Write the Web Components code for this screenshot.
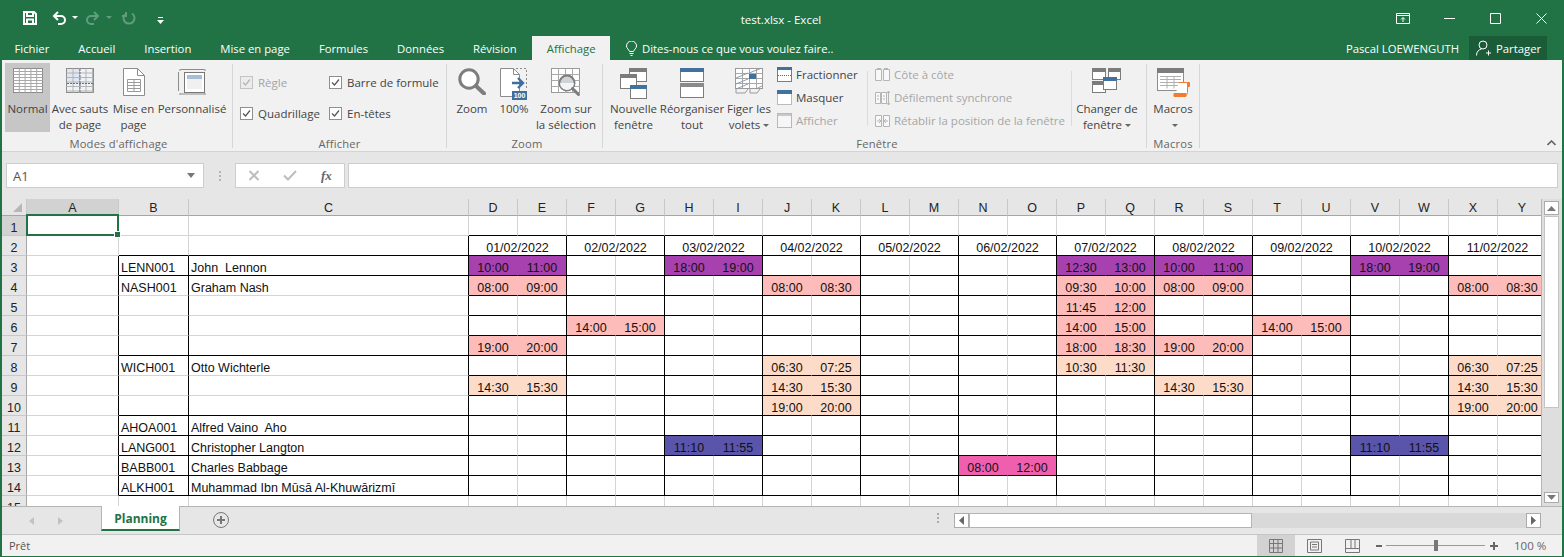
<!DOCTYPE html>
<html lang="fr">
<head>
<meta charset="utf-8">
<title>test.xlsx - Excel</title>
<style>
	html, body { margin: 0; padding: 0; background: #fff; }
</style>
</head>
<body>
<xl-app>
	<xl-titlebar title-text="test.xlsx - Excel"></xl-titlebar>
	<xl-tabs></xl-tabs>
	<xl-ribbon>
		<ribbon-group label="Modes d'affichage" w="231" pad="3">
			<ribbon-btn icon="normal" w="45" active>Normal</ribbon-btn>
			<ribbon-btn icon="breaks" w="60">Avec sauts<br>de page</ribbon-btn>
			<ribbon-btn icon="layout" w="47">Mise en<br>page</ribbon-btn>
			<ribbon-btn icon="custom" w="70">Personnalisé</ribbon-btn>
		</ribbon-group>
		<ribbon-group label="Afficher" w="214">
			<check-grid>
				<ribbon-check disabled>Règle</ribbon-check>
				<ribbon-check>Barre de formule</ribbon-check>
				<ribbon-check>Quadrillage</ribbon-check>
				<ribbon-check>En-têtes</ribbon-check>
			</check-grid>
		</ribbon-group>
		<ribbon-group label="Zoom" w="156" pad="5">
			<ribbon-btn icon="zoom" w="40">Zoom</ribbon-btn>
			<ribbon-btn icon="hundred" w="44">100%</ribbon-btn>
			<ribbon-btn icon="zoomsel" w="60">Zoom sur<br>la sélection</ribbon-btn>
		</ribbon-group>
		<ribbon-group label="Fenêtre" w="544" pad="5">
			<ribbon-btn icon="newwin" w="51">Nouvelle<br>fenêtre</ribbon-btn>
			<ribbon-btn icon="arrange" w="66">Réorganiser<br>tout</ribbon-btn>
			<ribbon-btn icon="freeze" w="48" caret>Figer les<br>volets</ribbon-btn>
			<small-list style="margin-left:4px;width:90px">
				<ribbon-small icon="split">Fractionner</ribbon-small>
				<ribbon-small icon="hide">Masquer</ribbon-small>
				<ribbon-small icon="show" disabled>Afficher</ribbon-small>
			</small-list>
			<inner-sep></inner-sep>
			<small-list style="margin-left:7px;width:196px">
				<ribbon-small icon="side" disabled>Côte à côte</ribbon-small>
				<ribbon-small icon="sync" disabled>Défilement synchrone</ribbon-small>
				<ribbon-small icon="reset" disabled>Rétablir la position de la fenêtre</ribbon-small>
			</small-list>
			<inner-sep></inner-sep>
			<ribbon-btn icon="switchwin" w="68" caret style="margin-left:1px">Changer de<br>fenêtre</ribbon-btn>
		</ribbon-group>
		<ribbon-group label="Macros" w="53">
			<ribbon-btn icon="macros" w="52" caret>Macros<br></ribbon-btn>
		</ribbon-group>
		<collapse-chevron></collapse-chevron>
	</xl-ribbon>
	<xl-formulabar></xl-formulabar>
	<xl-sheet></xl-sheet>
	<xl-sheettabs></xl-sheettabs>
	<xl-status></xl-status>
</xl-app>

<script>
'use strict';

const UI_FONT = `"Open Sans", "Noto Sans", sans-serif`;

// repeated hair lines for the little table pictures
const rules = (x, y, w, h, dx, dy) => {
	let d = '';
	if (dx) for (let i = x + dx; i < x + w; i += dx) d += `M${i} ${y}v${h}`;
	if (dy) for (let j = y + dy; j < y + h; j += dy) d += `M${x} ${j}h${w}`;
	return d;
};

const svg = (w, h, body) => `<svg width="${w}" height="${h}" viewBox="0 0 ${w} ${h}" fill="none" aria-hidden="true">${body}</svg>`;

const ICONS = {
	normal: svg(30, 25, `<rect x=".5" y=".5" width="29" height="24" fill="#fff" stroke="#8c8c8c"/><path d="${rules(0.5, 0.5, 29, 24, 5.8, 3)}" stroke="#a8a8a8"/>`),
	breaks: svg(28, 25, `<rect x=".5" y=".5" width="27" height="24" fill="#eef3f8" stroke="#8c8c8c"/><rect x="1" y="1" width="13" height="14" fill="#dfe8f2"/><path d="${rules(0.5, 0.5, 27, 24, 6.5, 4.5)}" stroke="#b4b4b4"/><path d="M14 1v23M1 15.5h26" stroke="#6d6d6d" stroke-dasharray="2 1"/>`),
	layout: svg(22, 28, `<path d="M.5.5h14l7 7v20H.5z" fill="#fff" stroke="#8c8c8c"/><path d="M14.5.5v7h7" stroke="#8c8c8c"/><path d="M4.5 11.5h13v12h-13z${rules(4.5, 11.5, 13, 12, 6.5, 3)}" stroke="#9a9a9a"/>`),
	custom: svg(28, 27, `<path d="M2.5 1.5h24M.5 4v19M2.5 26h24" stroke="#8c8c8c"/><path d="M2 1v2M27 1v2M2 25v2M27 25v2" stroke="#8c8c8c"/><rect x="6.5" y="4.5" width="20" height="20" fill="#fff" stroke="#777"/><rect x="9" y="7" width="15" height="4" fill="#a9bdd4"/><rect x="9" y="11" width="15" height="10" fill="#f0f0f0"/>`),
	zoom: svg(28, 27, `<circle cx="11" cy="11" r="9.2" fill="#fff" stroke="#7d7d7d" stroke-width="3"/><path d="M18 18l8 7.5" stroke="#7d7d7d" stroke-width="4" stroke-linecap="round"/>`),
	hundred: svg(28, 32, `<path d="M.5.5h13l6 6v22H.5z" fill="#fff" stroke="#8c8c8c"/><path d="M13.5.5v6h6" stroke="#8c8c8c"/><path d="M16 .5h10.5V22" stroke="#8c8c8c" stroke-dasharray="2 2"/><path d="M12 15h10M18 10l5 5-5 5" stroke="#3f6f9f" stroke-width="2.4"/><rect x="12" y="23" width="15" height="9" fill="#3f6f9f"/><text x="19.5" y="30.4" text-anchor="middle" font-family="Liberation Sans, sans-serif" font-size="7" font-weight="700" fill="#fff">100</text>`),
	zoomsel: svg(30, 29, `<rect x=".5" y=".5" width="28" height="24" fill="#fff" stroke="#9a9a9a"/><path d="${rules(0.5, 0.5, 28, 24, 7, 6)}" stroke="#ababab"/><circle cx="16" cy="15" r="7.5" fill="#cfd3d8" stroke="#7d7d7d" stroke-width="2"/><path d="M9 15a7 7 0 0 0 14 0z" fill="#f4f4f4"/><path d="M21.5 20.5l6 6" stroke="#7d7d7d" stroke-width="3" stroke-linecap="round"/>`),
	newwin: svg(28, 31, `<rect x="9.5" y=".5" width="17" height="13" fill="#fff" stroke="#7c7c7c"/><rect x="9" y="0" width="18" height="4" fill="#7c7c7c"/><rect x=".5" y="6.5" width="16" height="14" fill="#fff" stroke="#7c7c7c"/><rect x="0" y="6" width="17" height="4" fill="#7c7c7c"/><rect x="10.5" y="17.5" width="16" height="13" fill="#fff" stroke="#7c7c7c"/><rect x="10" y="17" width="17" height="4" fill="#41719c"/>`),
	arrange: svg(24, 30, `<rect x=".5" y=".5" width="23" height="13" fill="#fff" stroke="#7c7c7c"/><rect x="0" y="0" width="24" height="4" fill="#41719c"/><rect x=".5" y="15.5" width="23" height="14" fill="#fff" stroke="#7c7c7c"/><rect x="0" y="15" width="24" height="4" fill="#8a8a8a"/>`),
	freeze: svg(28, 26, `<rect x=".5" y=".5" width="27" height="20" fill="#fff" stroke="#9a9a9a"/><path d="${rules(0.5, 0.5, 27, 20, 7, 5)}" stroke="#a8a8a8"/><path d="M1 10l12-5M1 16l12-5M1 21l12-5M14 5l13-5M21 21l6-3" stroke="#8a9db0"/><rect x="14" y="6" width="7" height="5" fill="#41719c"/><path d="M1 21v4h9l3-4M15 21v4h7l3-4" stroke="#9a9a9a"/>`),
	split: svg(15, 15, `<rect x=".5" y=".5" width="14" height="14" fill="#fff" stroke="#7c7c7c"/><rect x="0" y="0" width="15" height="3" fill="#41719c"/><path d="M1 8.5h13" stroke="#666" stroke-dasharray="1 1"/>`),
	hide: svg(15, 15, `<rect x=".5" y=".5" width="14" height="14" fill="#fff" stroke="#7c7c7c" stroke-dasharray="1 1"/><rect x="0" y="0" width="15" height="4" fill="#41719c"/>`),
	show: svg(15, 15, `<rect x=".5" y=".5" width="14" height="14" fill="#f6f6f6" stroke="#b8b8b8"/><rect x="1" y="1" width="13" height="2" fill="#c8c8c8"/>`),
	side: svg(15, 15, `<path d="M.5 2.5h6v11h-6zM8.5 2.5h6v11h-6z" fill="#f8f8f8" stroke="#b5b5b5"/><path d="M2 1.5h4M9 1.5h4" stroke="#b5b5b5"/>`),
	sync: svg(15, 15, `<path d="M.5 2.5h5v11h-5zM6.5 2.5h5v11h-5z" fill="#f8f8f8" stroke="#b5b5b5"/><path d="M2 6h2M2 9h2M8 6h2M8 9h2M13.5 1v14M12 3l1.5-2 1.5 2M12 13l1.5 2 1.5-2" stroke="#b5b5b5"/>`),
	reset: svg(15, 15, `<path d="M.5 2.5h6v11h-6zM8.5 2.5h6v11h-6z" fill="#f8f8f8" stroke="#b5b5b5"/><path d="M2 8h4M4 6l2 2-2 2M13 8H9M11 6L9 8l2 2" stroke="#b5b5b5"/>`),
	switchwin: svg(30, 26, `<rect x=".5" y=".5" width="13" height="11" fill="#fff" stroke="#7c7c7c"/><rect x="0" y="0" width="14" height="4" fill="#7c7c7c"/><rect x="16.5" y=".5" width="12" height="11" fill="#fff" stroke="#7c7c7c"/><rect x="16" y="0" width="13" height="4" fill="#7c7c7c"/><rect x=".5" y="13.5" width="13" height="11" fill="#fff" stroke="#7c7c7c"/><rect x="0" y="13" width="14" height="4" fill="#7c7c7c"/><rect x="11.5" y="9.5" width="13" height="12" fill="#fff" stroke="#7c7c7c"/><rect x="11" y="9" width="14" height="4" fill="#41719c"/>`),
	macros: svg(33, 29, `<rect x=".5" y=".5" width="26" height="22" fill="#fff" stroke="#8c8c8c"/><rect x="0" y="0" width="27" height="5" fill="#7c7c7c"/><path d="${rules(3, 8.5, 21, 12, 7, 3)}" stroke="#b0b0b0"/><path d="M3 8.5h21" stroke="#b0b0b0"/><path d="M21.5 14.5h9v10a3 3 0 0 1-3 3h-9" fill="#fff" stroke="#ed7d31"/><path d="M30.5 14.5h2v4h-2M17 28.5h12v-3H17z" fill="#ed7d31" stroke="#ed7d31"/>`)
};

// Base class: shadow root filled from a css and an html string
const shell = (css, html) => class extends HTMLElement {
	constructor () {
		super();
		this.attachShadow({mode: 'open'}).innerHTML = `<style>${css}</style>${html}`;
	}
};

customElements.define('xl-app', shell(`
	:host {
		display: flex;
		flex-direction: column;
		box-sizing: border-box;
		width: 1564px;
		height: 557px;
		overflow: hidden;
		background: #f1f1f1;
		border: solid #217346;
		border-width: 0 2px 1px 2px;
		font: 11.5px ${UI_FONT};
		color: #444;
	}
`, `<slot></slot>`));

customElements.define('xl-titlebar', class extends HTMLElement {
	constructor () {
		super();
		const shadow = this.attachShadow({mode: 'open'});
		shadow.innerHTML = `
			<style>
				:host {
					display: grid;
					grid-template-columns: 696px 166px 1fr;
					align-items: center;
					height: 36px;
					margin: 0 -2px;
					padding-left: 2px;
					background: #217346;
					color: #fff;
				}
				.qat { display: flex; align-items: center; height: 32px; padding-left: 21px; }
				.qat svg { display: block; }
				.title { text-align: center; font-size: 11.5px; margin-top: 3px; }
				.win { display: flex; justify-content: flex-end; height: 32px; }
				.win span { width: 46px; display: flex; align-items: center; justify-content: center; }
			</style>
			<div class="qat">
				<svg width="14" height="14" viewBox="0 0 14 14" fill="none" stroke="#fff" stroke-width="2"><path d="M1 1h10l2 2v10H1z"/><path d="M4 1v4h6V1M4 13V8.500h6V13"/></svg>
				<svg style="margin-left:15px" width="15" height="14" viewBox="0 0 15 14" fill="none" stroke="#fff" stroke-width="2"><path d="M6 1L2 5l4 4M2 5h7a4 4 0 0 1 0 8H6"/></svg>
				<svg style="margin-left:5px" width="6" height="4" viewBox="0 0 6 4" fill="#fff"><path d="M0 0h6L3 3z"/></svg>
				<svg style="margin-left:7px" width="15" height="14" viewBox="0 0 15 14" fill="none" stroke="#5f9d7c" stroke-width="2"><path d="M9 1l4 4-4 4M13 5H6a4 4 0 0 0 0 8h3"/></svg>
				<svg style="margin-left:6px" width="6" height="4" viewBox="0 0 6 4" fill="#5f9d7c"><path d="M0 0h6L3 3z"/></svg>
				<svg style="margin-left:10px" width="14" height="14" viewBox="0 0 14 14" fill="none" stroke="#5f9d7c" stroke-width="2"><path d="M10 2.500a5.500 5.500 0 1 1-6 0M4 1v4H0"/></svg>
				<svg style="margin-left:21px;margin-top:4px" width="7" height="7" viewBox="0 0 7 7" fill="#fff"><path d="M1 0h5v1H1zM0 3h7L3.500 7z"/></svg>
			</div>
			<div class="title">${this.getAttribute('title-text')}</div>
			<div class="win">
				<span><svg width="14" height="11" viewBox="0 0 14 11" fill="none" stroke="#fff"><path d="M.5.500h13v10H.5zM.5 2.500h13M7 9V4.500M5 6.500l2-2 2 2"/></svg></span>
				<span><svg width="11" height="1" viewBox="0 0 11 1" fill="#fff"><path d="M0 0h11v1H0z"/></svg></span>
				<span><svg width="11" height="11" viewBox="0 0 11 11" fill="none" stroke="#fff"><path d="M.5.500h10v10H.5z"/></svg></span>
				<span><svg width="11" height="11" viewBox="0 0 11 11" fill="none" stroke="#fff"><path d="M.5.500l10 10M10.500.500l-10 10"/></svg></span>
			</div>
		`;
	}
});

customElements.define('xl-tabs', class extends HTMLElement {
	constructor () {
		super();
		const names = ['Fichier', 'Accueil', 'Insertion', 'Mise en page', 'Formules', 'Données', 'Révision'];
		const shadow = this.attachShadow({mode: 'open'});
		shadow.innerHTML = `
			<style>
				:host {
					display: flex;
					align-items: stretch;
					height: 24px;
					margin: 0 -2px;
					background: #217346;
					color: #fff;
					font-size: 11.300px;
					line-height: 25px;
				}
				.tab { padding: 0 14.500px; white-space: nowrap; }
				.tab:first-child { padding-left: 13px; }
				.tab.on { background: #f1f1f1; color: #217346; margin-left: 1px; }
				.ask { display: flex; align-items: center; gap: 5px; margin-left: 16px; }
				.ask svg { margin-top: 1px; }
				.right { margin-left: auto; display: flex; align-items: stretch; }
				.user { padding-right: 10px; }
				.share { display: flex; align-items: center; gap: 5px; width: 78px; box-sizing: border-box; padding-left: 7px; margin-right: 17px; background: #1a5c38; }
			</style>
			${names.map(n => `<div class="tab">${n}</div>`).join('')}
			<div class="tab on">Affichage</div>
			<div class="ask">
				<svg width="11" height="15" viewBox="0 0 11 15" fill="none" stroke="#fff"><path d="M3.500 10.500C3 8.500.5 7.500.5 5a5 5 0 0 1 10 0c0 2.500-2.500 3.500-3 5.500zM3.500 12.500h4M4.500 14.500h2"/></svg>
				<span>Dites-nous ce que vous voulez faire..</span>
			</div>
			<div class="right">
				<div class="user">Pascal LOEWENGUTH</div>
				<div class="share">
					<svg width="15" height="16" viewBox="0 0 15 16" fill="none" stroke="#fff"><circle cx="7" cy="5" r="4"/><path d="M.5 15.500c0-4 2.500-6 5-6.500M10 13h5M12.500 10.500v5"/></svg>
					<span>Partager</span>
				</div>
			</div>
		`;
	}
});

customElements.define('xl-ribbon', shell(`
	:host {
		display: flex;
		position: relative;
		box-sizing: border-box;
		height: 92px;
		padding-top: 4px;
		background: #f1f1f1;
		border-bottom: 1px solid #d4d4d4;
	}
`, `<slot></slot>`));

customElements.define('ribbon-group', class extends HTMLElement {
	constructor () {
		super();
		const shadow = this.attachShadow({mode: 'open'});
		shadow.innerHTML = `
			<style>
				:host {
					display: flex;
					flex-direction: column;
					flex: none;
					box-sizing: border-box;
					width: ${this.getAttribute('w')}px;
					height: 84px;
					padding-left: ${this.getAttribute('pad') || 0}px;
					border-right: 1px solid #d6d6d6;
				}
				.body { display: flex; flex: 1; min-height: 0; margin-top: -1px; }
				.label { text-align: center; line-height: 21px; height: 15px; color: #666; font-size: 11.200px; letter-spacing: .2px; }
			</style>
			<div class="body"><slot></slot></div>
			<div class="label">${this.getAttribute('label')}</div>
		`;
	}
});

customElements.define('ribbon-btn', class extends HTMLElement {
	constructor () {
		super();
		const shadow = this.attachShadow({mode: 'open'});
		shadow.innerHTML = `
			<style>
				:host {
					display: block;
					flex: none;
					box-sizing: border-box;
					width: ${this.getAttribute('w')}px;
					height: 69px;
					text-align: center;
					line-height: 16px;
					white-space: nowrap;
				}
				:host([active]) { background: #c6c6c6; }
				.icon { display: flex; align-items: flex-start; justify-content: center; height: 38px; padding-top: 5px; box-sizing: border-box; }
				.icon svg { display: block; }
				.caret { display: inline-block; vertical-align: 2px; margin-left: 3px; border: 3px solid transparent; border-top: 3px solid #666; border-bottom: 0; }
				.text { margin: 0 -6px; }
			</style>
			<div class="icon">${ICONS[this.getAttribute('icon')]}</div>
			<div class="text"><slot></slot>${this.hasAttribute('caret') ? '<span class="caret"></span>' : ''}</div>
		`;
	}
});

customElements.define('check-grid', shell(`
	:host {
		display: grid;
		grid-template-columns: 89px auto;
		grid-template-rows: 31px 31px;
		padding: 4px 0 0 7px;
	}
`, `<slot></slot>`));

customElements.define('ribbon-check', class extends HTMLElement {
	constructor () {
		super();
		const shadow = this.attachShadow({mode: 'open'});
		const off = this.hasAttribute('disabled');
		shadow.innerHTML = `
			<style>
				:host { display: flex; align-items: center; gap: 5px; white-space: nowrap; color: ${off ? '#a3a3a3' : '#444'}; }
				svg { display: block; flex: none; }
			</style>
			<svg width="13" height="13" viewBox="0 0 13 13" fill="none"><rect x=".5" y=".5" width="12" height="12" fill="${off ? '#ececec' : '#fff'}" stroke="${off ? '#c4c4c4' : '#8f8f8f'}"/><path d="M3 6.500l2.500 2.500 4.500-5.500" stroke="${off ? '#b5b5b5' : '#555'}" stroke-width="1.200"/></svg>
			<span><slot></slot></span>
		`;
	}
});

customElements.define('small-list', shell(`
	:host {
		display: flex;
		flex-direction: column;
		flex: none;
	}
`, `<slot></slot>`));

customElements.define('ribbon-small', class extends HTMLElement {
	constructor () {
		super();
		const shadow = this.attachShadow({mode: 'open'});
		shadow.innerHTML = `
			<style>
				:host { display: flex; align-items: center; gap: 4px; height: 23px; white-space: nowrap; color: ${this.hasAttribute('disabled') ? '#a6a6a6' : '#444'}; }
				svg { display: block; flex: none; }
			</style>
			${ICONS[this.getAttribute('icon')]}
			<span><slot></slot></span>
		`;
	}
});

customElements.define('inner-sep', shell(`
	:host { display: block; flex: none; width: 1px; height: 55px; margin-top: 8px; background: #dcdcdc; }
`, ``));

customElements.define('collapse-chevron', shell(`
	:host { position: absolute; right: 6px; bottom: 5px; display: block; line-height: 0; }
`, `<svg width="9" height="6" viewBox="0 0 9 6" fill="none" stroke="#666" stroke-width="1.600"><path d="M.5 5l4-4 4 4"/></svg>`));

customElements.define('xl-formulabar', class extends HTMLElement {
	constructor () {
		super();
		const shadow = this.attachShadow({mode: 'open'});
		shadow.innerHTML = `
			<style>
				:host {
					display: flex;
					box-sizing: border-box;
					height: 47px;
					padding: 11px 4px 11px 4px;
					background: #e6e6e6;
					color: #555;
				}
				.box { box-sizing: border-box; height: 25px; background: #fff; border: 1px solid #cdcdcd; }
				.name { width: 198px; display: flex; align-items: center; justify-content: space-between; padding: 0 8px 0 6px; font-size: 13px; color: #555; }
				.name i { border: 4px solid transparent; border-top: 5px solid #777; border-bottom: 0; }
				.dots { width: 31px; display: flex; flex-direction: column; align-items: center; justify-content: center; gap: 2px; }
				.dots i { width: 2px; height: 2px; background: #b4b4b4; }
				.btns { width: 110px; display: flex; align-items: center; gap: 23px; padding-left: 12px; }
				.fx { font: italic 700 13px "Liberation Serif", serif; color: #666; margin-left: 1px; }
				.input { flex: 1; margin-left: 3px; }
			</style>
			<div class="box name"><span>A1</span><i></i></div>
			<div class="dots"><i></i><i></i><i></i></div>
			<div class="box btns">
				<svg width="12" height="11" viewBox="0 0 12 11" fill="none" stroke="#bdbdbd" stroke-width="2"><path d="M1.500 1l9 9M10.500 1l-9 9"/></svg>
				<svg width="14" height="11" viewBox="0 0 14 11" fill="none" stroke="#bdbdbd" stroke-width="2"><path d="M1 5.500l4 4L13 1"/></svg>
				<span class="fx">fx</span>
			</div>
			<div class="box input"></div>
		`;
	}
});

customElements.define('xl-sheet', class extends HTMLElement {
	constructor () {
		super();
		const shadow = this.attachShadow({mode: 'open'});
		shadow.innerHTML = `
			<style>
				:host {
					display: flex;
					flex: 1;
					min-height: 0;
					background: #e4e4e4;
				}
				.wrap {
					position: relative;
					width: 1540px;
					flex: none;
					overflow: hidden;
					background: #fff;
					border-right: 1px solid #b4b4b4;
					box-sizing: border-box;
				}
				.grid {
					display: grid;
					grid-template-columns: 25px 92px 70px 280px repeat(22, 49px);
					grid-template-rows: 17px repeat(15, 20px);
					font: 12.500px "Liberation Sans", Arial, sans-serif;
					color: #111;
				}
				.grid div { box-sizing: border-box; white-space: nowrap; overflow: hidden; }
				.hd { background: #e6e6e6; color: #222; text-align: center; line-height: 18px; border-right: 1px solid #c8c8c8; border-bottom: 1px solid #a6a6a6; }
				.hd.on { background: #d2d2d2; }
				.corner { position: relative; }
				.corner::after { content: ''; position: absolute; right: 4px; bottom: 3px; border: solid transparent; border-width: 0 0 9px 9px; border-bottom-color: #b7b7b7; }
				.rw { background: #e6e6e6; color: #222; text-align: center; line-height: 24px; border-right: 1px solid #a6a6a6; border-bottom: 1px solid #c8c8c8; }
				.rw.on { background: #d2d2d2; }
				.c { line-height: 24px; padding-left: 2px; border-right: 1px solid #d4d4d4; border-bottom: 1px solid #d4d4d4; }
				.t { text-align: center; padding-left: 0; }
				.sel { position: absolute; left: 24px; top: 15px; width: 93px; height: 22px; box-sizing: border-box; border: 2px solid #217346; }
				.sel i { position: absolute; right: -4px; bottom: -4px; width: 5px; height: 5px; background: #217346; border: 1px solid #fff; }
				.v { flex: 1; display: flex; flex-direction: column; align-items: center; padding: 2px 2px 3px 0; box-sizing: border-box; background: #dedede; }
				.arrow { box-sizing: border-box; flex: none; width: 15px; height: 14px; background: #fff; border: 1px solid #ababab; display: flex; align-items: center; justify-content: center; }
				.arrow.down { height: 11px; }
				.thumb { box-sizing: border-box; width: 15px; height: 192px; background: #fff; border: 1px solid #c4c4c4; margin-top: 1px; }
				.gap { flex: 1; }
			</style>
			<div class="wrap">
				<div class="grid"></div>
				<div class="sel"><i></i></div>
			</div>
			<div class="v">
				<div class="arrow"><svg width="9" height="5" viewBox="0 0 9 5" fill="#777"><path d="M4.500 0L9 5H0z"/></svg></div>
				<div class="thumb"></div>
				<div class="gap"></div>
				<div class="arrow down"><svg width="9" height="5" viewBox="0 0 9 5" fill="#777"><path d="M0 0h9L4.500 5z"/></svg></div>
			</div>
		`;
		this.build(shadow.querySelector('.grid'));
	}

	build (grid) {
		const letters = 'ABCDEFGHIJKLMNOPQRSTUVWXY'.split('');
		const ids = {3: ['LENN001', 'John  Lennon'], 4: ['NASH001', 'Graham Nash'], 8: ['WICH001', 'Otto Wichterle'], 11: ['AHOA001', 'Alfred Vaino  Aho'], 12: ['LANG001', 'Christopher Langton'], 13: ['BABB001', 'Charles Babbage'], 14: ['ALKH001', 'Muhammad Ibn Mūsā Al-Khuwārizmī']};
		const purple = '#a741af';
		const rose = '#fdbcb9';
		const peach = '#fcdbc8';
		const blue = '#5a55aa';
		const magenta = '#f05fae';
		// row -> first column letter of the pair -> [start, end, fill]
		const times = {
			3: {D: ['10:00', '11:00', purple], H: ['18:00', '19:00', purple], P: ['12:30', '13:00', purple], R: ['10:00', '11:00', purple], V: ['18:00', '19:00', purple]},
			4: {D: ['08:00', '09:00', rose], J: ['08:00', '08:30', rose], P: ['09:30', '10:00', rose], R: ['08:00', '09:00', rose], X: ['08:00', '08:30', rose]},
			5: {P: ['11:45', '12:00', rose]},
			6: {F: ['14:00', '15:00', rose], P: ['14:00', '15:00', rose], T: ['14:00', '15:00', rose]},
			7: {D: ['19:00', '20:00', rose], P: ['18:00', '18:30', rose], R: ['19:00', '20:00', rose]},
			8: {J: ['06:30', '07:25', peach], P: ['10:30', '11:30', peach], X: ['06:30', '07:25', peach]},
			9: {D: ['14:30', '15:30', peach], J: ['14:30', '15:30', peach], R: ['14:30', '15:30', peach], X: ['14:30', '15:30', peach]},
			10: {J: ['19:00', '20:00', peach], X: ['19:00', '20:00', peach]},
			12: {H: ['11:10', '11:55', blue], V: ['11:10', '11:55', blue]},
			13: {N: ['08:00', '12:00', magenta]}
		};
		const blackUnder = [3, 7, 10, 11, 12, 13, 14];
		let html = '<div class="hd corner"></div>';
		letters.forEach((l, i) => {
			html += `<div class="hd${i === 0 ? ' on' : ''}">${l}</div>`;
		});
		for (let r = 1; r <= 15; r++) {
			html += `<div class="rw${r === 1 ? ' on' : ''}">${r}</div>`;
			for (let c = 0; c < letters.length; c++) {
				const body = c >= 3;
				const pairEnd = body && (c - 3) % 2 === 1;
				// merged date header on row 2
				if (r === 2 && body) {
					if (pairEnd) continue;
					const day = String((c - 3) / 2 + 1).padStart(2, '0');
					html += `<div class="c t" style="grid-column:span 2;border-right-color:#000;border-bottom-color:#000">${day}/02/2022</div>`;
					continue;
				}
				let style = '';
				let cls = 'c';
				let text = '';
				const under = r >= 3 && r <= 14 ? (body || (c > 0 && blackUnder.includes(r))) : (r === 1 ? body : r === 2 && c > 0);
				if (under) style += 'border-bottom-color:#000;';
				const right = r >= 3 && r <= 14 && (c <= 2 || pairEnd);
				if (right || (r === 2 && c === 2)) style += 'border-right-color:#000;';
				if (body && times[r]) {
					const first = letters[pairEnd ? c - 1 : c];
					const slot = times[r][first];
					if (slot) {
						cls += ' t';
						text = slot[pairEnd ? 1 : 0];
						style += `background:${slot[2]};`;
						if (!pairEnd) style += 'border-right-color:transparent;';
					}
				}
				if (ids[r] && (c === 1 || c === 2)) {
					text = ids[r][c - 1];
					style += 'white-space:pre;';
				}
				html += `<div class="${cls}" style="${style}">${text}</div>`;
			}
		}
		grid.innerHTML = html;
	}
});

customElements.define('xl-sheettabs', class extends HTMLElement {
	constructor () {
		super();
		const shadow = this.attachShadow({mode: 'open'});
		shadow.innerHTML = `
			<style>
				:host {
					display: flex;
					align-items: flex-start;
					flex: none;
					box-sizing: border-box;
					height: 29px;
					background: #e6e6e6;
					border-top: 1px solid #b4b4b4;
					border-bottom: 1px solid #c6c6c6;
				}
				.nav { display: flex; align-items: center; gap: 24px; width: 99px; height: 27px; padding-left: 27px; box-sizing: border-box; }
				.tab {
					box-sizing: border-box;
					width: 79px;
					height: 25px;
					margin-top: -1px;
					text-align: center;
					background: #fff;
					border: solid #b4b4b4;
					border-width: 0 1px;
					border-bottom: 2px solid #217346;
					color: #217346;
					font-weight: 700;
					font-size: 12px;
					line-height: 25px;
				}
				.plus { margin: 5px 0 0 33px; display: block; }
				.dots { margin: 6px 0 0 708px; display: flex; flex-direction: column; gap: 2px; width: 2px; }
				.dots i { width: 2px; height: 2px; background: #a9a9a9; }
				.h { display: flex; margin: 6px 0 0 15px; width: 587px; height: 15px; background: #d9d9d9; }
				.arrow { box-sizing: border-box; flex: none; width: 15px; height: 15px; background: #fff; border: 1px solid #ababab; display: flex; align-items: center; justify-content: center; }
				.thumb { box-sizing: border-box; width: 283px; height: 15px; background: #fff; border: 1px solid #b4b4b4; }
				.gap { flex: 1; }
			</style>
			<div class="nav">
				<svg width="5" height="8" viewBox="0 0 5 8" fill="#c2c2c2"><path d="M5 0v8L0 4z"/></svg>
				<svg width="5" height="8" viewBox="0 0 5 8" fill="#c2c2c2"><path d="M0 0v8l5-4z"/></svg>
			</div>
			<div class="tab">Planning</div>
			<svg class="plus" width="16" height="16" viewBox="0 0 16 16" fill="none" stroke="#777"><circle cx="8" cy="8" r="7.500"/><path d="M8 4v8M4 8h8" stroke-width="2"/></svg>
			<div class="dots"><i></i><i></i><i></i></div>
			<div class="h">
				<div class="arrow"><svg width="5" height="9" viewBox="0 0 5 9" fill="#666"><path d="M5 0v9L0 4.500z"/></svg></div>
				<div class="thumb"></div>
				<div class="gap"></div>
				<div class="arrow"><svg width="5" height="9" viewBox="0 0 5 9" fill="#666"><path d="M0 0v9l5-4.500z"/></svg></div>
			</div>
		`;
	}
});

customElements.define('xl-status', class extends HTMLElement {
	constructor () {
		super();
		const shadow = this.attachShadow({mode: 'open'});
		shadow.innerHTML = `
			<style>
				:host {
					display: flex;
					align-items: stretch;
					flex: none;
					height: 21px;
					background: #f1f1f1;
					color: #555;
					font-size: 11px;
					line-height: 21px;
				}
				.ready { width: 1255px; padding-left: 7px; box-sizing: border-box; }
				.view { width: 38px; display: flex; align-items: center; justify-content: center; }
				.view.on { background: #d2d2d2; }
				.zoom { display: flex; align-items: center; margin-left: 5px; position: relative; }
				.line { width: 99px; height: 1px; margin: 0 5px 0 4px; background: #9a9a9a; position: relative; }
				.line i { position: absolute; left: 48px; top: -5px; width: 4px; height: 11px; background: #777; }
				.pct { margin-left: 16px; font-size: 11.500px; color: #666; }
			</style>
			<div class="ready">Prêt</div>
			<div class="view on"><svg width="14" height="14" viewBox="0 0 14 14" fill="none" stroke="#777"><path d="M.5.500h13v13H.5zM.5 4.500h13M.5 9h13M4.500.500v13M9 .500v13"/></svg></div>
			<div class="view"><svg width="15" height="14" viewBox="0 0 15 14" fill="none" stroke="#777"><path d="M.5.500h14v13H.5zM3.500 3h8v8h-8zM5 5.500h5M5 8h5"/></svg></div>
			<div class="view"><svg width="15" height="14" viewBox="0 0 15 14" fill="none" stroke="#777"><path d="M.5.500h14v13H.5zM.5 9.500h14M6 .500v9M10 .500v9"/></svg></div>
			<div class="zoom">
				<svg width="6" height="2" viewBox="0 0 6 2" fill="#666"><path d="M0 0h6v2H0z"/></svg>
				<div class="line"><i></i></div>
				<svg width="8" height="8" viewBox="0 0 8 8" fill="#666"><path d="M3 0h2v3h3v2H5v3H3V5H0V3h3z"/></svg>
			</div>
			<div class="pct">100 %</div>
		`;
	}
});
</script>
</body>
</html>
